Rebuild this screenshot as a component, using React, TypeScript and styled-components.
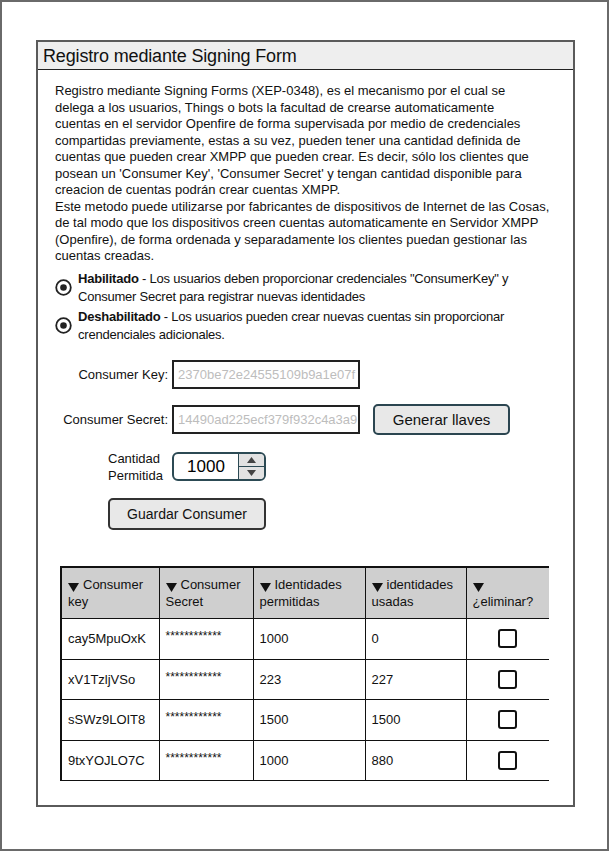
import React from "react";
import styled, { createGlobalStyle } from "styled-components";

const GlobalStyle = createGlobalStyle`
  html, body { margin: 0; padding: 0; background: #fff; }
  body { font-family: "Liberation Sans", Arial, sans-serif; color: #111; }
  * { box-sizing: border-box; }
`;

const Frame = styled.div`
  width: 609px;
  height: 851px;
  border: 2px solid #6a6a6a;
  padding: 38px 0 0 34px;
`;

const Panel = styled.section`
  width: 539px;
  height: 767px;
  border: 2px solid #5a5a5a;
  display: flex;
  flex-direction: column;
`;

const PanelHeader = styled.header`
  height: 28px;
  background: #eeeeee;
  border-bottom: 1px solid #222;
  padding: 3px 0 0 5px;
  font-size: 18px;
  line-height: 22px;
  letter-spacing: -0.15px;
  color: #111;
`;

const Body = styled.div`
  padding: 13px 0 0 17px;
  display: flex;
  flex-direction: column;
`;

const Description = styled.p`
  margin: 0;
  font-size: 13px;
  line-height: 16.5px;
  color: #111;
`;

const Line = styled.span`
  display: block;
  white-space: nowrap;
`;

const Options = styled.div`
  margin-top: 5px;
  display: flex;
  flex-direction: column;
  gap: 2px;
`;

const Option = styled.label`
  display: flex;
  align-items: center;
  gap: 6px;
`;

const OptionText = styled.div`
  width: 432px;
  overflow: hidden;
  font-size: 13px;
  line-height: 18px;
  letter-spacing: -0.22px;
  white-space: nowrap;
`;

const Strong = styled.b`
  font-weight: bold;
`;

const FormRow = styled.div<{ $top: number }>`
  display: flex;
  align-items: center;
  margin-top: ${(p) => p.$top}px;
  margin-left: -17px;
`;

const LabelCell = styled.div`
  width: 130px;
  margin-right: 4px;
  display: flex;
  justify-content: flex-end;
  font-size: 13px;
  line-height: 17px;
  white-space: nowrap;
`;

const StackLabel = styled.div`
  text-align: left;
  width: 62px;
  margin-right: -2px;
`;

const TextInput = styled.div`
  width: 188px;
  height: 29px;
  border: 2px solid #222;
  background: #fff;
  color: #bdbdbd;
  font-size: 13px;
  line-height: 25px;
  padding-left: 4px;
  overflow: hidden;
  white-space: nowrap;
`;

const Button = styled.button<{ $w: number; $h: number; $fs: number; $bc: string }>`
  width: ${(p) => p.$w}px;
  height: ${(p) => p.$h}px;
  border: 2px solid ${(p) => p.$bc};
  border-radius: 5px;
  background: #e8e8e8;
  font-family: "Liberation Sans", Arial, sans-serif;
  font-size: ${(p) => p.$fs}px;
  color: #111;
  padding: 0;
`;

const GenerateButton = styled(Button)`
  margin-left: 13px;
`;

const Spinner = styled.div`
  width: 94px;
  height: 29px;
  border: 2px solid #2c4a54;
  border-radius: 6px;
  display: flex;
  overflow: hidden;
  background: #fff;
`;

const SpinValue = styled.div`
  width: 64px;
  font-size: 17px;
  line-height: 25px;
  text-align: center;
  color: #000;
`;

const SpinButtons = styled.div`
  flex: 1;
  border-left: 1px solid #2c4a54;
  background: #e2e2e2;
  display: flex;
  flex-direction: column;
`;

const SpinHalf = styled.div<{ $top?: boolean }>`
  flex: 1;
  display: flex;
  align-items: center;
  justify-content: center;
  border-bottom: ${(p) => (p.$top ? "1px solid #2c4a54" : "none")};
`;

const SaveRow = styled.div`
  margin-top: 14px;
  margin-left: 53px;
`;

const Table = styled.table`
  margin-top: 36px;
  margin-left: 5px;
  border-collapse: collapse;
  width: 488px;
  table-layout: fixed;
  border-left: 2px solid #111;
  font-size: 13px;
`;

const HeadCell = styled.th<{ $w: number }>`
  width: ${(p) => p.$w}px;
  height: 52px;
  background: #cfcfcf;
  border-top: 2px solid #111;
  border-bottom: 1px solid #111;
  border-left: 1px solid #111;
  text-align: left;
  font-weight: normal;
  padding: 0 0 0 6px;
  line-height: 17px;
  color: #111;
  vertical-align: middle;
  &:first-child { border-left: none; }
`;

const Cell = styled.td<{ $center?: boolean }>`
  height: 40.5px;
  border-bottom: 1px solid #111;
  border-left: 1px solid #111;
  padding: 0 0 0 6px;
  text-align: ${(p) => (p.$center ? "center" : "left")};
  vertical-align: middle;
  white-space: nowrap;
  color: #111;
  &:first-child { border-left: none; }
`;

const Stars = styled.span`
  font-size: 12px;
  position: relative;
  top: -3px;
`;

const CheckBox = styled.span`
  display: inline-block;
  width: 19px;
  height: 19px;
  border: 2px solid #111;
  border-radius: 3px;
  margin-left: -6px;
  vertical-align: middle;
`;

const ArrowIcon = styled.svg`
  vertical-align: -3px;
  margin-right: 4px;
`;

const Radio = () => (
  <svg width="17" height="17" viewBox="0 0 17 17">
    <circle cx="8.5" cy="8.5" r="7.3" fill="#fff" stroke="#222" strokeWidth="1.8" />
    <circle cx="8.5" cy="8.5" r="3.3" fill="#222" />
  </svg>
);

const Arrow = () => (
  <ArrowIcon width="11" height="10" viewBox="0 0 11 10">
    <polygon points="0,1 11,1 5.5,10" fill="#111" />
  </ArrowIcon>
);

const Tri = ({ up }: { up?: boolean }) => (
  <svg width="9" height="6" viewBox="0 0 9 6">
    <polygon points={up ? "4.5,0 9,6 0,6" : "0,0 9,0 4.5,6"} fill="#444" />
  </svg>
);

const rows = [
  { key: "cay5MpuOxK", allowed: "1000", used: "0" },
  { key: "xV1TzljVSo", allowed: "223", used: "227" },
  { key: "sSWz9LOIT8", allowed: "1500", used: "1500" },
  { key: "9txYOJLO7C", allowed: "1000", used: "880" },
];

const description = [
  "Registro mediante Signing Forms (XEP-0348), es el mecanismo por el cual se",
  "delega a  los usuarios, Things o bots la facultad de crearse automaticamente",
  "cuentas en el servidor Openfire de forma supervisada por medio de credenciales",
  "compartidas previamente, estas a su vez, pueden tener una cantidad definida de",
  "cuentas que pueden crear XMPP que pueden crear. Es decir, sólo los clientes que",
  "posean un 'Consumer Key', 'Consumer Secret' y tengan cantidad disponible para",
  "creacion de cuentas podrán crear cuentas XMPP.",
  "Este metodo puede utilizarse por fabricantes de dispositivos de Internet de las Cosas,",
  "de tal modo que los dispositivos creen cuentas automaticamente en Servidor XMPP",
  "(Openfire), de forma ordenada y separadamente los clientes puedan gestionar las",
  "cuentas creadas.",
];

export default function App() {
  return (
    <>
      <GlobalStyle />
      <Frame>
        <Panel>
          <PanelHeader>Registro mediante Signing Form</PanelHeader>
          <Body>
            <Description>
              {description.map((l, i) => (
                <Line key={i}>{l}</Line>
              ))}
            </Description>
            <Options>
              <Option>
                <Radio />
                <OptionText>
                  <Line>
                    <Strong>Habilitado</Strong> - Los usuarios deben proporcionar credenciales "ConsumerKey" y
                  </Line>
                  <Line>Consumer Secret para registrar nuevas identidades</Line>
                </OptionText>
              </Option>
              <Option>
                <Radio />
                <OptionText>
                  <Line>
                    <Strong>Deshabilitado</Strong> - Los usuarios pueden crear nuevas cuentas sin proporcionar
                  </Line>
                  <Line>crendenciales adicionales.</Line>
                </OptionText>
              </Option>
            </Options>
            <FormRow $top={16}>
              <LabelCell>Consumer Key:</LabelCell>
              <TextInput>2370be72e24555109b9a1e07f</TextInput>
            </FormRow>
            <FormRow $top={15}>
              <LabelCell>Consumer Secret:</LabelCell>
              <TextInput>14490ad225ecf379f932c4a3a9</TextInput>
              <GenerateButton $w={137} $h={31} $fs={15} $bc="#2b4550">
                Generar llaves
              </GenerateButton>
            </FormRow>
            <FormRow $top={15}>
              <LabelCell>
                <StackLabel>
                  Cantidad
                  <br />
                  Permitida
                </StackLabel>
              </LabelCell>
              <Spinner>
                <SpinValue>1000</SpinValue>
                <SpinButtons>
                  <SpinHalf $top>
                    <Tri up />
                  </SpinHalf>
                  <SpinHalf>
                    <Tri />
                  </SpinHalf>
                </SpinButtons>
              </Spinner>
            </FormRow>
            <SaveRow>
              <Button $w={158} $h={32} $fs={14} $bc="#333">
                Guardar Consumer
              </Button>
            </SaveRow>
            <Table>
              <thead>
                <tr>
                  <HeadCell $w={98}>
                    <Arrow />Consumer
                    <br />
                    key
                  </HeadCell>
                  <HeadCell $w={94}>
                    <Arrow />Consumer
                    <br />
                    Secret
                  </HeadCell>
                  <HeadCell $w={112}>
                    <Arrow />Identidades
                    <br />
                    permitidas
                  </HeadCell>
                  <HeadCell $w={101}>
                    <Arrow />identidades
                    <br />
                    usadas
                  </HeadCell>
                  <HeadCell $w={83}>
                    <Arrow />
                    <br />
                    ¿eliminar?
                  </HeadCell>
                </tr>
              </thead>
              <tbody>
                {rows.map((r) => (
                  <tr key={r.key}>
                    <Cell>{r.key}</Cell>
                    <Cell>
                      <Stars>************</Stars>
                    </Cell>
                    <Cell>{r.allowed}</Cell>
                    <Cell>{r.used}</Cell>
                    <Cell $center>
                      <CheckBox />
                    </Cell>
                  </tr>
                ))}
              </tbody>
            </Table>
          </Body>
        </Panel>
      </Frame>
    </>
  );
}
